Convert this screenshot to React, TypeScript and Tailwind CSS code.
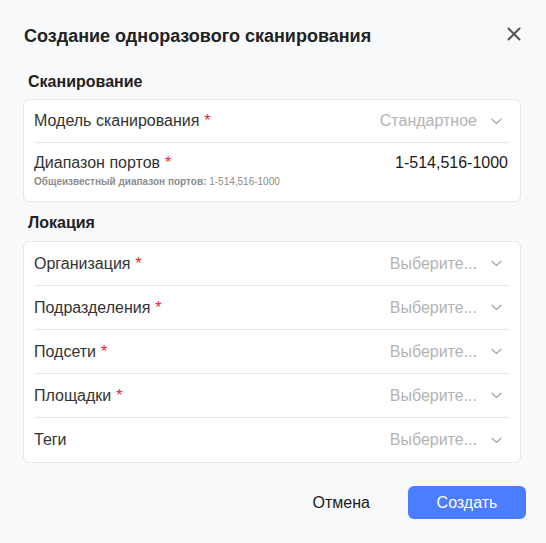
import React from "react";

const Chevron = () => (
  <svg width="11" height="7" viewBox="0 0 11 7" fill="none" className="shrink-0">
    <path d="M1 1.2L5.5 5.5L10 1.2" stroke="#a8a8a8" strokeWidth="1.3" strokeLinecap="round" strokeLinejoin="round" />
  </svg>
);

const Req = () => <span className="text-[#f5222d] ml-[5px]">*</span>;

interface SelectRowProps {
  label: string;
  required?: boolean;
  value: string;
  divider?: boolean;
  height?: string;
}

function SelectRow({ label, required, value, divider, height = "h-[44px]" }: SelectRowProps) {
  return (
    <div className={`flex items-center justify-between ${height} ${divider ? "border-b border-[#e8e8e8]" : ""}`}>
      <span className="text-[16px] leading-[18px] text-[#333]">
        {label}
        {required && <Req />}
      </span>
      <span className="flex items-center gap-[14px] pr-[8px]">
        <span className="text-[16px] leading-[18px] text-[#b3b3b3]">{value}</span>
        <Chevron />
      </span>
    </div>
  );
}

export default function App() {
  return (
    <div
      className="w-[546px] h-[543px] bg-[#f8f9fb] pt-[24px] px-[23px]"
      style={{ fontFamily: '"Liberation Sans", Arial, sans-serif' }}
    >
      {/* Header */}
      <div className="flex items-center justify-between h-[24px] pl-[1px] pr-[1px]">
        <h2 className="text-[18px] leading-[24px] font-bold text-[#222]">Создание одноразового сканирования</h2>
        <button className="w-[16px] h-[16px] flex items-center justify-center mt-[-4px]">
          <svg width="14" height="14" viewBox="0 0 14 14" fill="none">
            <path d="M1.5 1.5L12.5 12.5M12.5 1.5L1.5 12.5" stroke="#555" strokeWidth="2" strokeLinecap="round" />
          </svg>
        </button>
      </div>

      {/* Scan section */}
      <div className="mt-[24px] mb-[7px] pl-[5px] text-[16px] leading-[20px] font-bold text-[#222]">Сканирование</div>
      <div className="w-[498px] bg-white border border-[#e6e8eb] rounded-[6px] px-[10px]">
        <SelectRow label="Модель сканирования" required value="Стандартное" divider height="h-[43px]" />
        <div className="flex justify-between pt-[11px] h-[58px]">
          <div>
            <div className="text-[16px] leading-[18px] text-[#333]">
              Диапазон портов
              <Req />
            </div>
            <div className="mt-[4px] text-[10px] leading-[12px] font-bold text-[#8c8c8c]">
              Общеизвестный диапазон портов: <span className="font-normal">1-514,516-1000</span>
            </div>
          </div>
          <div className="text-[16px] leading-[18px] text-[#1a1a1a] pr-[2px]">1-514,516-1000</div>
        </div>
      </div>

      {/* Location section */}
      <div className="mt-[11px] mb-[8px] pl-[5px] text-[16px] leading-[20px] font-bold text-[#222]">Локация</div>
      <div className="w-[498px] bg-white border border-[#e6e8eb] rounded-[6px] px-[10px]">
        <SelectRow label="Организация" required value="Выберите..." divider />
        <SelectRow label="Подразделения" required value="Выберите..." divider />
        <SelectRow label="Подсети" required value="Выберите..." divider />
        <SelectRow label="Площадки" required value="Выберите..." divider />
        <SelectRow label="Теги" value="Выберите..." />
      </div>

      {/* Footer */}
      <div className="flex items-center justify-end gap-[38px] mt-[23px] mr-[-3px]">
        <button className="text-[16px] leading-[18px] text-[#1a1a1a]">Отмена</button>
        <button className="w-[118px] h-[33px] rounded-[6px] bg-[#4a7dff] text-white text-[16px] leading-[18px]">
          Создать
        </button>
      </div>
    </div>
  );
}
